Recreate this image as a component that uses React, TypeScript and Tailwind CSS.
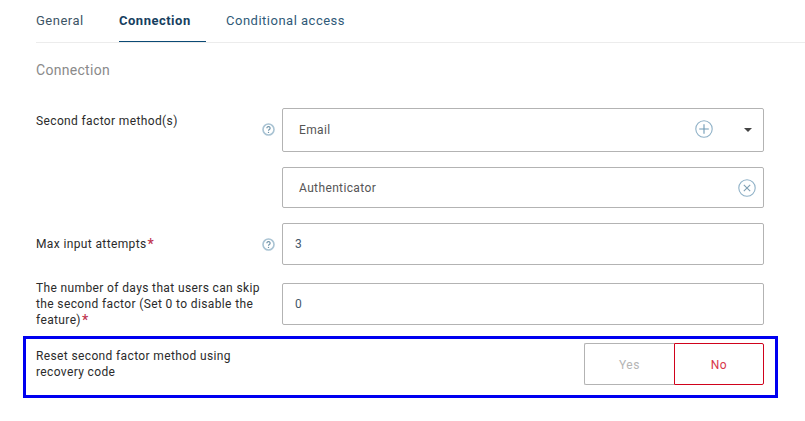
import React from 'react';

const HelpIcon = () => (
  <svg width="13" height="13" viewBox="0 0 13 13" fill="none">
    <circle cx="6.5" cy="6.5" r="5.5" stroke="#a9c3d3" strokeWidth="1.6" />
    <path d="M4.9 5.2a1.6 1.6 0 1 1 2.4 1.4c-.5.3-.8.6-.8 1.1" stroke="#6f93a8" strokeWidth="1.2" />
    <circle cx="6.5" cy="9.4" r="0.7" fill="#6f93a8" />
  </svg>
);

const PlusIcon = () => (
  <svg width="18" height="18" viewBox="0 0 18 18" fill="none" className="-mt-[3px]">
    <circle cx="9" cy="9" r="8.2" stroke="#8fb1c7" strokeWidth="1.1" />
    <path d="M9 4.2v9.6M4.2 9h9.6" stroke="#6f9ab5" strokeWidth="1.1" />
  </svg>
);

const ClearIcon = () => (
  <svg width="18" height="18" viewBox="0 0 18 18" fill="none">
    <circle cx="9" cy="9" r="8.2" stroke="#8fb1c7" strokeWidth="1.1" />
    <path d="M5.8 5.8l6.4 6.4M12.2 5.8l-6.4 6.4" stroke="#7f9fb3" strokeWidth="1.1" />
  </svg>
);

const Required = () => <span className="text-[#c0354f] text-[14px] font-medium leading-[12px] align-[-1px] ml-[1px]">*</span>;

const App: React.FC = () => {
  return (
    <div className="w-[805px] h-[421px] bg-white overflow-hidden pl-[36px] pr-[41px] font-['Roboto',sans-serif] text-[12px] leading-[16px] tracking-[0.37px] text-[#2b2b2b]">
      {/* Tabs */}
      <div className="flex h-[43px] -mr-[41px] border-b border-[#ececec] text-[13px] tracking-[0.5px] text-[#2f5a78]">
        <div className="pt-[13px] w-[83px] text-[#3d5566]">General</div>
        <div className="w-[87px] h-[42px] pt-[13px] font-bold text-[#173f5f] border-b border-[#0b4a75]">Connection</div>
        <div className="pt-[13px] ml-[20px]">Conditional access</div>
      </div>

      <div className="mt-[18px] text-[14px] leading-[18px] tracking-[0.3px] text-[#8a8a8a]">Connection</div>

      {/* Second factor */}
      <div className="flex mt-[29px]">
        <div className="w-[226px] pt-[5px]">Second factor method(s)</div>
        <div className="w-[20px] pt-[15px]"><HelpIcon /></div>
        <div className="flex-1 flex flex-col gap-[15px]">
          <div className="h-[44px] border border-[#b3b3b3] rounded-[2px] flex items-center pl-[16px] pr-[11px] text-[#555]">
            <span className="flex-1">Email</span>
            <PlusIcon />
            <span className="ml-[31px] w-0 h-0 border-x-[4px] border-x-transparent border-t-[4px] border-t-[#444]" />
          </div>
          <div className="h-[41px] border border-[#b3b3b3] rounded-[2px] flex items-center pl-[16px] pr-[7px] text-[#555]">
            <span className="flex-1">Authenticator</span>
            <ClearIcon />
          </div>
        </div>
      </div>

      {/* Max attempts */}
      <div className="flex mt-[15px]">
        <div className="w-[226px] pt-[13px]">Max input attempts<Required /></div>
        <div className="w-[20px] pt-[15px]"><HelpIcon /></div>
        <div className="flex-1 h-[42px] border border-[#b3b3b3] rounded-[2px] flex items-center pl-[12px] text-[#44576a]">3</div>
      </div>

      {/* Skip days */}
      <div className="flex h-[42px] mt-[18px]">
        <div className="w-[246px] pr-[12px] -mt-[3px]">The number of days that users can skip the second factor (Set 0 to disable the feature)<Required /></div>
        <div className="flex-1 border border-[#b3b3b3] rounded-[2px] flex items-center pl-[12px] text-[#44576a]">0</div>
      </div>

      {/* Recovery code */}
      <div className="flex justify-between items-start h-[62px] mt-[11px] -ml-[13px] -mr-[14px] border-[3px] border-[#0000f0] pl-[10px] pr-[11px] pt-[4px]">
        <div className="w-[225px] pt-[5px]">Reset second factor method using recovery code</div>
        <div className="flex h-[42px] tracking-[0.55px]">
          <div className="w-[90px] pt-[1px] border border-r-0 border-[#b3b3b3] rounded-l-[2px] flex items-center justify-center text-[#b5b5b5]">Yes</div>
          <div className="w-[90px] pt-[1px] border border-[#d0021b] rounded-r-[2px] flex items-center justify-center text-[#d8364a]">No</div>
        </div>
      </div>
    </div>
  );
};

export default App;
